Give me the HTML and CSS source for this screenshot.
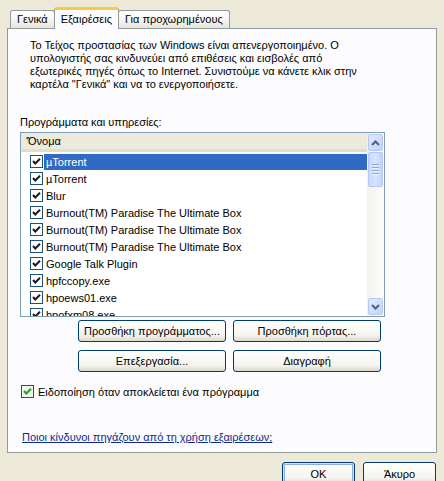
FILE: index.html
```
<!DOCTYPE html>
<html lang="el">
<head>
    <meta charset="UTF-8">
    <title>Τείχος προστασίας των Windows</title>
    <link rel="stylesheet" href="styles.css">
</head>
<body>
    <div class="dialog">
        <div class="tabs">
            <div class="tab">Γενικά</div>
            <div class="tab active">Εξαιρέσεις</div>
            <div class="tab">Για προχωρημένους</div>
        </div>
        <div class="panel">
            <p class="intro">
                Το Τείχος προστασίας των Windows είναι απενεργοποιημένο. Ο<br>
                υπολογιστής σας κινδυνεύει από επιθέσεις και εισβολές από<br>
                εξωτερικές πηγές όπως το Internet. Συνιστούμε να κάνετε κλικ στην<br>
                καρτέλα "Γενικά" και να το ενεργοποιήσετε.
            </p>

            <div class="label">Προγράμματα και υπηρεσίες:</div>
            <div class="listview">
                <div class="list-body">
                    <div class="list-header">'Όνομα</div>
                    <div class="rows" id="rows"></div>
                </div>
                <div class="scrollbar">
                    <div class="sb-btn">
                        <svg width="9" height="6" viewBox="0 0 9 6"><path d="M1 5 L4.5 1.5 L8 5" fill="none" stroke="#4D6185" stroke-width="2"/></svg>
                    </div>
                    <div class="sb-thumb">
                        <span></span><span></span><span></span><span></span>
                    </div>
                    <div class="sb-track"></div>
                    <div class="sb-btn">
                        <svg width="9" height="6" viewBox="0 0 9 6"><path d="M1 1 L4.5 4.5 L8 1" fill="none" stroke="#4D6185" stroke-width="2"/></svg>
                    </div>
                </div>
            </div>

            <div class="btn-grid">
                <button class="btn">Προσθήκη προγράμματος...</button>
                <button class="btn">Προσθήκη πόρτας...</button>
                <button class="btn">Επεξεργασία...</button>
                <button class="btn">Διαγραφή</button>
            </div>

            <label class="notify">
                <svg class="chk" width="13" height="13" viewBox="0 0 13 13">
                    <rect x="0.5" y="0.5" width="12" height="12" fill="#F4F4F0" stroke="#1C5180"/>
                    <path d="M3 6 L5.3 8.5 L10 3.8" fill="none" stroke="#21A121" stroke-width="2"/>
                </svg>
                Ειδοποίηση όταν αποκλείεται ένα πρόγραμμα
            </label>

            <a class="risk-link" href="#">Ποιοι κίνδυνοι πηγάζουν από τη χρήση εξαιρέσεων;</a>
        </div>

        <div class="footer">
            <button class="btn btn-default">OK</button>
            <button class="btn">Άκυρο</button>
        </div>
    </div>

    <script>
        const programs = [
            'µTorrent', 'µTorrent', 'Blur',
            'Burnout(TM) Paradise The Ultimate Box',
            'Burnout(TM) Paradise The Ultimate Box',
            'Burnout(TM) Paradise The Ultimate Box',
            'Google Talk Plugin', 'hpfccopy.exe', 'hpoews01.exe', 'hpofxm08.exe'
        ];
        const rows = document.getElementById('rows');
        programs.forEach((name, i) => {
            const row = document.createElement('div');
            row.className = 'row';
            row.innerHTML = '<svg class="chk" width="13" height="13" viewBox="0 0 13 13">' +
                '<rect x="0.5" y="0.5" width="12" height="12" fill="#fff" stroke="#1C5180"/>' +
                '<path d="M3 6 L5.3 8.5 L10 3.8" fill="none" stroke="#1a1a1a" stroke-width="2"/></svg>';
            const text = document.createElement('span');
            text.className = i === 0 ? 'name selected' : 'name';
            text.textContent = name;
            row.appendChild(text);
            rows.appendChild(row);
        });
    </script>
</body>
</html>
```
FILE: styles.css
```
body {
    margin: 0;
    background-color: #ECE9D8;
    color: #000;
    font-family: 'Liberation Sans', Arial, sans-serif;
    font-size: 11px;
    overflow: hidden;
}
.dialog {
    padding: 6px 0 0 7px;
    width: 430px;
}
.tabs {
    display: flex;
    align-items: flex-end;
    height: 22px;
    padding-left: 3px;
}
.tab {
    height: 17px;
    line-height: 17px;
    padding: 0 6px;
    border: 1px solid #919B9C;
    border-bottom: none;
    border-radius: 3px 3px 0 0;
    background: linear-gradient(#FFFFFF, #F3F3EF 60%, #E6E4DA);
    margin-right: -1px;
}
.tab.active {
    height: 19px;
    line-height: 19px;
    padding: 0 6px;
    border-top: 3px solid #FFC83C;
    background: #FCFCFE;
    margin-bottom: -1px;
    position: relative;
    z-index: 1;
}
.panel {
    height: 423px;
    border: 1px solid #919B9C;
    background-color: #FCFCFE;
    padding: 0 0 0 12px;
    display: flex;
    flex-direction: column;
}
.intro {
    margin: 10px 0 0 10px;
    line-height: 13px;
    white-space: nowrap;
}
.label {
    margin-top: 25px;
    line-height: 13px;
}
.listview {
    margin-top: 3px;
    width: 363px;
    height: 183px;
    border: 1px solid #7F9DB9;
    background: #fff;
    display: flex;
    overflow: hidden;
}
.list-body {
    flex: 1;
    overflow: hidden;
}
.list-header {
    height: 16px;
    line-height: 16px;
    padding-left: 5px;
    background: #EBEADB;
    border-bottom: 3px solid #E2DECD;
}
.rows {
    padding-top: 1px;
}
.row {
    display: flex;
    align-items: center;
    height: 17px;
    padding-left: 9px;
}
.row .chk {
    flex-shrink: 0;
}
.name {
    margin-left: 1px;
    padding: 0 2px;
    line-height: 16px;
    flex: 1;
    white-space: nowrap;
}
.name.selected {
    background-color: #316AC5;
    color: #fff;
}
.scrollbar {
    width: 17px;
    display: flex;
    flex-direction: column;
    background: linear-gradient(90deg, #F3F1EC, #FEFEFB);
}
.sb-btn {
    height: 15px;
    margin: 1px;
    border: 1px solid #B5C8F3;
    border-radius: 2px;
    background: linear-gradient(135deg, #E2EAFE, #C1D3FB);
    display: flex;
    align-items: center;
    justify-content: center;
}
.sb-thumb {
    height: 33px;
    margin: 0 1px;
    border: 1px solid #B5C8F3;
    border-radius: 2px;
    background: linear-gradient(90deg, #C9D8FC, #D8E3FE 50%, #C3D4FC);
    display: flex;
    flex-direction: column;
    align-items: center;
    justify-content: center;
    gap: 1px;
}
.sb-thumb span {
    width: 7px;
    height: 1px;
    background: #8CA6DA;
    border-bottom: 1px solid #EEF4FE;
}
.sb-track {
    flex: 1;
}
.btn-grid {
    display: grid;
    grid-template-columns: 148px 148px;
    grid-auto-rows: 22px;
    column-gap: 7px;
    row-gap: 8px;
    margin: 3px 0 0 58px;
}
.btn {
    font-family: inherit;
    font-size: 11px;
    color: #000;
    border: 1px solid #003C74;
    border-radius: 3px;
    background: linear-gradient(#FFFFFF, #F5F4EF 70%, #DCD8CC);
    padding: 0;
}
.notify {
    display: flex;
    align-items: center;
    gap: 4px;
    margin-top: 12px;
    margin-left: 1px;
    height: 15px;
}
.risk-link {
    margin-top: 32px;
    margin-left: 2px;
    color: #0B2A8E;
    text-decoration: underline;
    align-self: flex-start;
}
.footer {
    display: flex;
    justify-content: flex-end;
    gap: 8px;
    margin-top: 9px;
    padding-right: 1px;
}
.footer .btn {
    width: 73px;
    height: 23px;
}
.btn-default {
    box-shadow: inset 0 0 0 1px #CFE0FC, inset 0 0 0 2px #89ADE4;
}
```
